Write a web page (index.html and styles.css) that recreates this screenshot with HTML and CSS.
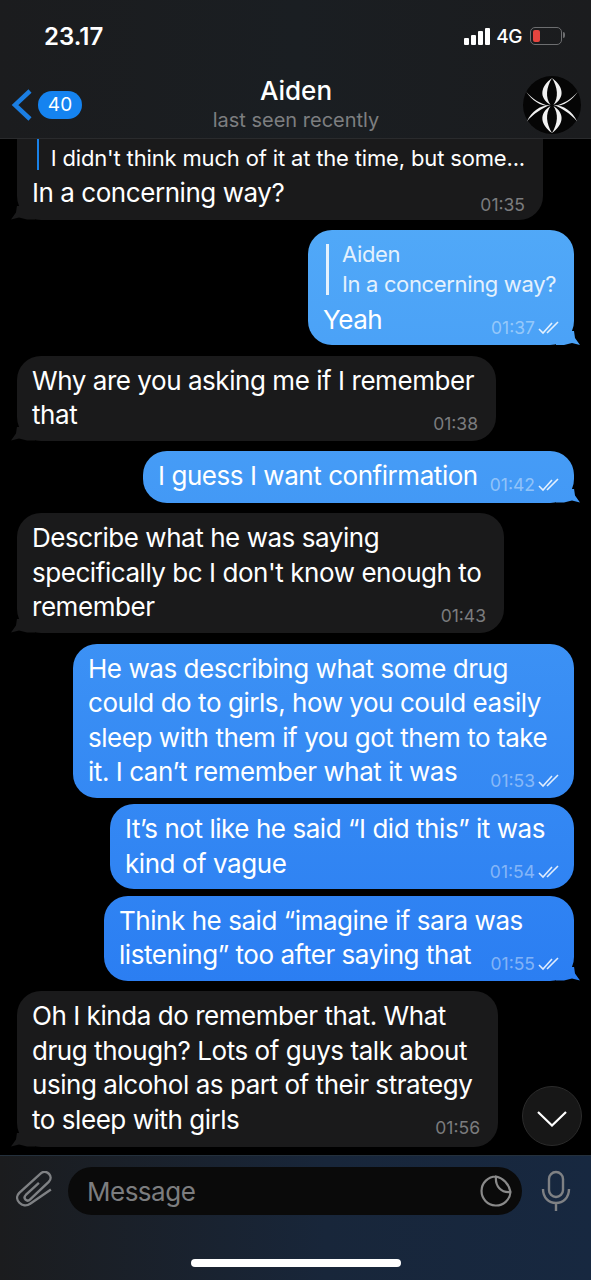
FILE: index.html
```html
<!DOCTYPE html>
<html lang="en">
<head>
    <meta charset="UTF-8">
    <meta name="viewport" content="width=device-width, initial-scale=1.0">
    <title>Aiden</title>
    <link rel="stylesheet" href="styles.css">
</head>
<body>
    <div class="app">
        <header class="top">
            <div class="status">
                <span class="clock">23.17</span>
                <div class="status-right">
                    <div class="signal"><i></i><i></i><i></i><i></i></div>
                    <span class="net">4G</span>
                    <div class="battery"><div class="battery-level"></div></div>
                </div>
            </div>
            <div class="nav">
                <div class="back">
                    <svg width="22" height="32" viewBox="0 0 22 32"><path d="M19 2 L4 16 L19 30" fill="none" stroke="#1b7ee2" stroke-width="4.5"/></svg>
                    <span class="badge">40</span>
                </div>
                <div class="who">
                    <div class="name">Aiden</div>
                    <div class="seen">last seen recently</div>
                </div>
                <svg class="avatar" width="58" height="58" viewBox="0 0 60 60">
                    <circle cx="30" cy="30" r="30" fill="#050505"/>
                    <g fill="#f2f2f2">
                        <path d="M30 2 C18 11 16 22 28.5 30 C23 22 24 12 30 2 Z"/>
                        <path d="M30 2 C42 11 44 22 31.5 30 C37 22 36 12 30 2 Z"/>
                        <path d="M30 59 C18 50 16 39 28.5 31 C23 39 24 49 30 59 Z"/>
                        <path d="M30 59 C42 50 44 39 31.5 31 C37 39 36 49 30 59 Z"/>
                        <path d="M3 16 C10 24 18 29 28 31 C19 31.500 10 26 3 16 Z"/>
                        <path d="M57 16 C50 24 42 29 32 31 C41 31.500 50 26 57 16 Z"/>
                        <path d="M4 47 C9 36 18 30.500 28 30 C20 33 11 39 4 47 Z"/>
                        <path d="M56 47 C51 36 42 30.500 32 30 C40 33 49 39 56 47 Z"/>
                    </g>
                </svg>
            </div>
        </header>

        <main class="chat">
            <div class="msg in first m1">
                <div class="reply">
                    <div class="bar"></div>
                    <div class="reply-text">I didn't think much of it at the time, but some...</div>
                </div>
                <div class="body">
                    <div class="text">In a concerning way?</div>
                    <div class="meta">01:35</div>
                </div>
            </div>

            <div class="msg out m2">
                <div class="reply reply-out">
                    <div class="bar"></div>
                    <div class="reply-text">Aiden<br>In a concerning way?</div>
                </div>
                <div class="body">
                    <div class="text">Yeah</div>
                    <div class="meta">01:37 <svg class="ticks" width="22" height="14" viewBox="0 0 22 14"><path d="M1 8 L5 12 L14 2 M9 12 L20 1" fill="none" stroke="currentColor" stroke-width="1.6"/></svg></div>
                </div>
            </div>

            <div class="msg in m3">
                <div class="body">
                    <div class="text">Why are you asking me if I remember<br>that</div>
                    <div class="meta">01:38</div>
                </div>
            </div>

            <div class="msg out m4">
                <div class="body">
                    <div class="text">I guess I want confirmation</div>
                    <div class="meta">01:42 <svg class="ticks" width="22" height="14" viewBox="0 0 22 14"><path d="M1 8 L5 12 L14 2 M9 12 L20 1" fill="none" stroke="currentColor" stroke-width="1.6"/></svg></div>
                </div>
            </div>

            <div class="msg in m5">
                <div class="body">
                    <div class="text">Describe what he was saying<br>specifically bc I don't know enough to<br>remember</div>
                    <div class="meta">01:43</div>
                </div>
            </div>

            <div class="msg out no-tail m6">
                <div class="body">
                    <div class="text">He was describing what some drug<br>could do to girls, how you could easily<br>sleep with them if you got them to take<br>it. I can’t remember what it was</div>
                    <div class="meta">01:53 <svg class="ticks" width="22" height="14" viewBox="0 0 22 14"><path d="M1 8 L5 12 L14 2 M9 12 L20 1" fill="none" stroke="currentColor" stroke-width="1.6"/></svg></div>
                </div>
            </div>

            <div class="msg out no-tail tight m7">
                <div class="body">
                    <div class="text">It’s not like he said “I did this” it was<br>kind of vague</div>
                    <div class="meta">01:54 <svg class="ticks" width="22" height="14" viewBox="0 0 22 14"><path d="M1 8 L5 12 L14 2 M9 12 L20 1" fill="none" stroke="currentColor" stroke-width="1.6"/></svg></div>
                </div>
            </div>

            <div class="msg out tight m8">
                <div class="body">
                    <div class="text">Think he said “imagine if sara was<br>listening” too after saying that</div>
                    <div class="meta">01:55 <svg class="ticks" width="22" height="14" viewBox="0 0 22 14"><path d="M1 8 L5 12 L14 2 M9 12 L20 1" fill="none" stroke="currentColor" stroke-width="1.6"/></svg></div>
                </div>
            </div>

            <div class="msg in m9">
                <div class="body">
                    <div class="text">Oh I kinda do remember that. What<br>drug though? Lots of guys talk about<br>using alcohol as part of their strategy<br>to sleep with girls</div>
                    <div class="meta">01:56</div>
                </div>
            </div>

            <div class="down">
                <svg width="30" height="16" viewBox="0 0 30 16"><path d="M1 1 L15 14.500 L29 1" fill="none" stroke="#fff" stroke-width="2.2"/></svg>
            </div>
        </main>

        <footer class="bottom">
            <div class="compose">
                <svg class="clip" width="36" height="40" viewBox="12 12 33 36.7"><path d="M33 23 L21 34 C18 37 22 41 25 38 L42 22 C47 17 40 10 35 14 L15 32 C9 38 18 47 25 42 L44 29" fill="none" stroke="#7f8184" stroke-width="2.2"/></svg>
                <div class="field">
                    <span class="placeholder">Message</span>
                    <svg width="32" height="32" viewBox="0 0 32 32"><path d="M16 1.500 A14.500 14.500 0 1 0 30.500 17 C29 9 23 3 16 1.500 C15 11 21 18 30.500 17" fill="none" stroke="#8a8a8a" stroke-width="2.2"/></svg>
                </div>
                <svg class="mic" width="30" height="42" viewBox="0 0 30 42"><rect x="8" y="2" width="14" height="25" rx="7" fill="none" stroke="#7f8184" stroke-width="2.4"/><path d="M2 19 C2 28 8 33 15 33 C22 33 28 28 28 19 M15 33 L15 41" fill="none" stroke="#7f8184" stroke-width="2.4"/></svg>
            </div>
            <div class="home"></div>
        </footer>
    </div>
</body>
</html>
```

FILE: styles.css
```css
* {
    box-sizing: border-box;
}

html, body {
    margin: 0;
    background: #000;
}

body {
    font-family: Inter, "Liberation Sans", sans-serif;
    color: #fff;
}

.app {
    display: flex;
    flex-direction: column;
    width: 591px;
    height: 1280px;
    overflow: hidden;
}

/* top bar */

.top {
    height: 139px;
    flex: none;
    background: linear-gradient(90deg, #1b1c1e, #1a1e22 50%, #1b1c1e);
    border-bottom: 1px solid #2a2b2d;
}

.status {
    display: flex;
    justify-content: space-between;
    align-items: center;
    height: 72px;
    padding: 0 29px 0 44px;
}

.clock {
    font-size: 24px;
    font-weight: 600;
}

.status-right {
    display: flex;
    align-items: center;
    gap: 6px;
}

.signal {
    display: flex;
    align-items: flex-end;
    gap: 2px;
    height: 17px;
}

.signal i {
    display: block;
    width: 5px;
    background: #fff;
    border-radius: 1px;
}

.signal i:nth-child(1) { height: 7px; }
.signal i:nth-child(2) { height: 10px; }
.signal i:nth-child(3) { height: 14px; }
.signal i:nth-child(4) { height: 17px; }

.net {
    font-size: 19px;
    font-weight: 500;
    letter-spacing: -0.5px;
}

.battery {
    position: relative;
    width: 32px;
    height: 18px;
    padding: 2px;
    margin-left: 2px;
    border: 1.5px solid #6d6e70;
    border-radius: 5px;
}

.battery::after {
    content: "";
    position: absolute;
    right: -4px;
    top: 4px;
    width: 2px;
    height: 6px;
    background: #6d6e70;
    border-radius: 0 2px 2px 0;
}

.battery-level {
    width: 7px;
    height: 100%;
    background: #e5453f;
    border-radius: 2px;
}

.nav {
    display: grid;
    grid-template-columns: 1fr auto 1fr;
    align-items: center;
    height: 66px;
    padding: 0 10px 0 11px;
}

.back {
    display: flex;
    align-items: center;
    gap: 5px;
}

.badge {
    width: 44px;
    height: 28px;
    line-height: 28px;
    text-align: center;
    font-size: 19px;
    background: #1583f0;
    border-radius: 14px;
}

.who {
    text-align: center;
    margin-top: -2px;
}

.name {
    font-size: 26px;
    font-weight: 500;
    line-height: 32px;
}

.seen {
    font-size: 20px;
    line-height: 26px;
    color: #7d7e80;
}

.avatar {
    justify-self: end;
}

/* messages */

.chat {
    position: relative;
    flex: 1;
    min-height: 0;
    overflow: hidden;
    padding: 0 17px;
    display: flex;
    flex-direction: column;
    background: #000;
}

.msg {
    position: relative;
    flex: none;
    margin-top: 10.5px;
    padding: 8px 18px 8px 15px;
    font-size: 26px;
    line-height: 34.5px;
    letter-spacing: -0.45px;
    border-radius: 24px;
}

.msg.tight {
    margin-top: 6.5px;
}

.msg.first {
    margin-top: 0;
    padding-top: 0;
    border-radius: 0 0 24px 24px;
}

.in {
    align-self: flex-start;
    background: #1a1a1b;
}

.out {
    align-self: flex-end;
    padding-right: 14px;
    background: linear-gradient(180deg, #52aaf8 200px, #2a7df2 1000px) fixed;
}

.in::before {
    content: "";
    position: absolute;
    left: -6px;
    bottom: 0;
    width: 24px;
    height: 14px;
    background: #1a1a1b;
    clip-path: polygon(100% 0, 6px 0, 5px 50%, 0 100%, 8px 86%, 16px 100%, 100% 100%);
}

.out:not(.no-tail)::before {
    content: "";
    position: absolute;
    right: -6px;
    bottom: 0;
    width: 24px;
    height: 14px;
    background: linear-gradient(180deg, #52aaf8 200px, #2a7df2 1000px) fixed;
    clip-path: polygon(0 0, 18px 0, 19px 50%, 24px 100%, 16px 86%, 8px 100%, 0 100%);
}

.body {
    display: grid;
}

.text,
.meta {
    grid-area: 1 / 1;
}

.text {
    white-space: nowrap;
}

.meta {
    justify-self: end;
    align-self: end;
    display: flex;
    align-items: center;
    gap: 3px;
    height: 22px;
    margin-bottom: -2px;
    font-size: 17.5px;
    line-height: 22px;
    letter-spacing: 0;
    color: #7b7c7e;
}

.out .meta {
    color: rgba(255, 255, 255, 0.42);
}

.ticks {
    color: rgba(255, 255, 255, 0.85);
}

.reply {
    display: flex;
    align-items: flex-start;
    gap: 12px;
    padding-left: 5px;
    margin-bottom: 6px;
    font-size: 22px;
    line-height: 24px;
    letter-spacing: -0.16px;
}

.reply .bar {
    width: 3px;
    height: 31px;
    background: #1a82e8;
}

.reply-text {
    padding-top: 7px;
    white-space: nowrap;
}

.reply-out {
    align-items: center;
    gap: 13px;
    padding-left: 3px;
    margin-bottom: 3.5px;
    line-height: 30px;
    letter-spacing: -0.35px;
    color: #e4f1fd;
}

.reply-out .bar {
    height: 51px;
    background: #e4f1fd;
}

.reply-out .reply-text {
    padding-top: 0;
}

/* one width per bubble, the text is broken by hand */
.m1 { width: 526px; }
.m1 .body { padding-bottom: 1px; }
.m1 .meta { margin-bottom: -5px; }
.m2 { width: 266px; padding-top: 9px; }
.m3 { width: 479px; }
.m4 { width: 431px; padding-bottom: 9px; }
.m5 { width: 487px; }
.m6 { width: 501px; margin-top: 11.5px; padding-top: 7.5px; }
.m7 { width: 464px; }
.m8 { width: 470px; }
.m9 { width: 481px; padding-bottom: 9.5px; }

.down {
    position: absolute;
    right: 9px;
    bottom: 9px;
    width: 60px;
    height: 60px;
    display: flex;
    align-items: center;
    justify-content: center;
    padding-top: 6px;
    background: #171717;
    border: 1px solid #2b2b2b;
    border-radius: 50%;
}

/* input bar */

.bottom {
    height: 125px;
    flex: none;
    background: linear-gradient(90deg, #1b1c1e, #18263a 55%, #172840);
    border-top: 1px solid #24303c;
}

.compose {
    display: flex;
    align-items: center;
    height: 70px;
    padding: 0 20px 0 16px;
}

.field {
    flex: 1;
    display: flex;
    align-items: center;
    justify-content: space-between;
    height: 48px;
    margin: 0 19px 0 16px;
    padding: 0 10px 0 19px;
    background: #0a0a0a;
    border-radius: 24px;
}

.placeholder {
    font-size: 26px;
    letter-spacing: -0.5px;
    color: #7c7d7f;
}

.home {
    width: 210px;
    height: 8px;
    margin: 33px auto 0;
    background: #fff;
    border-radius: 4px;
}
```
